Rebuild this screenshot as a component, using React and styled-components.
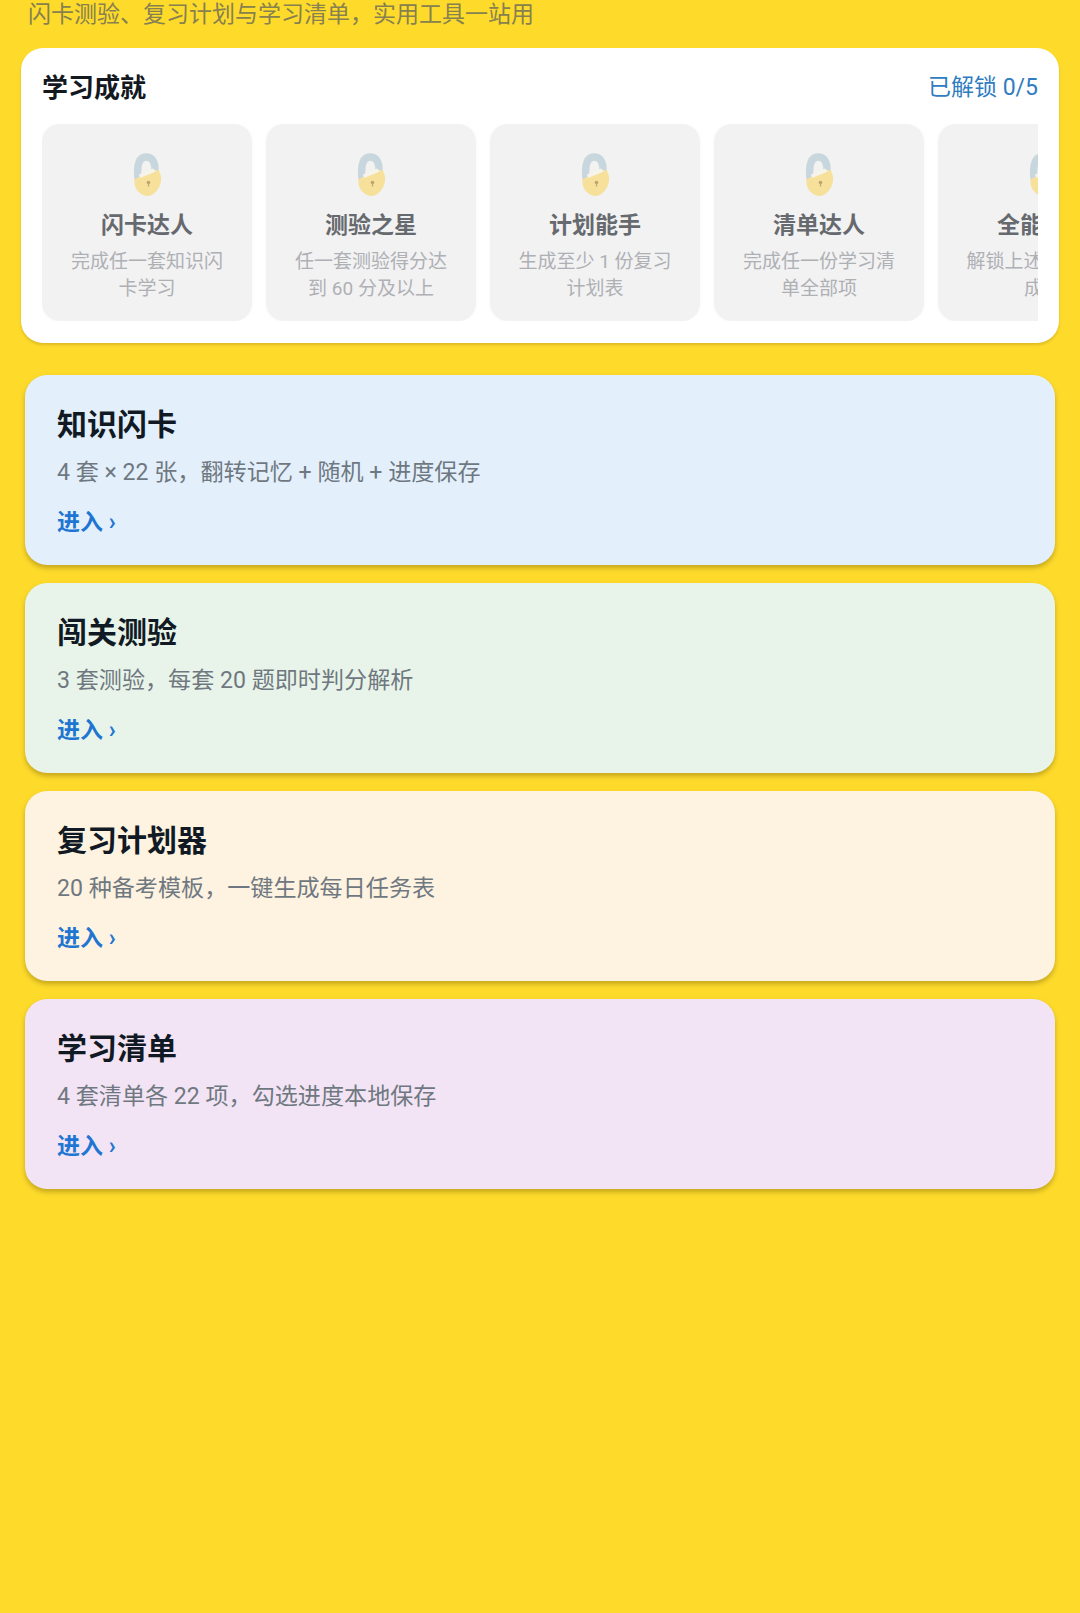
import React from 'react';
import styled, { createGlobalStyle } from 'styled-components';

const achievements = [
  { title: '闪卡达人', desc: '完成任一套知识闪卡学习' },
  { title: '测验之星', desc: '任一套测验得分达到 60 分及以上' },
  { title: '计划能手', desc: '生成至少 1 份复习计划表' },
  { title: '清单达人', desc: '完成任一份学习清单全部项' },
  { title: '全能学霸', desc: '解锁上述全部 4 项成就' },
];

const tools = [
  { title: '知识闪卡', desc: '4 套 × 22 张，翻转记忆 + 随机 + 进度保存', bg: '#e3f0fc' },
  { title: '闯关测验', desc: '3 套测验，每套 20 题即时判分解析', bg: '#e8f4e9' },
  { title: '复习计划器', desc: '20 种备考模板，一键生成每日任务表', bg: '#fef2e0' },
  { title: '学习清单', desc: '4 套清单各 22 项，勾选进度本地保存', bg: '#f2e4f5' },
];

const LockIcon = () => (
  <LockSvg viewBox="0 0 28 43" aria-hidden="true">
    <path d="M5 25 C3.5 11 6.5 4 13 4 C19.5 4 22.5 9 22 20" fill="none" stroke="#c8d7de" strokeWidth="7.5" strokeLinecap="round" />
    <path d="M1.5 26 L25 16.5 C27.5 20 28.5 24 28 28 C27 36 20.5 43 14.5 43 C8.5 43 2.5 37.5 1.5 31 Z" fill="#f7e09a" />
    <path d="M6 21.5 L20 15.5 L23 18.5 L7 25 Z" fill="#f6f4ea" />
    <circle cx="15.5" cy="29.5" r="1.8" fill="#b8a771" />
    <rect x="14.9" y="29.5" width="1.2" height="4" fill="#b8a771" />
  </LockSvg>
);

const App = () => {
  return (
    <Page>
      <GlobalStyle />
      <Subtitle>闪卡测验、复习计划与学习清单，实用工具一站用</Subtitle>

      <AchievementPanel>
        <PanelHeader>
          <PanelTitle>学习成就</PanelTitle>
          <UnlockCount>已解锁 0/5</UnlockCount>
        </PanelHeader>
        <BadgeRow>
          {achievements.map(item => (
            <Badge key={item.title}>
              <LockIcon />
              <BadgeTitle>{item.title}</BadgeTitle>
              <BadgeDesc>{item.desc}</BadgeDesc>
            </Badge>
          ))}
        </BadgeRow>
      </AchievementPanel>

      <ToolList>
        {tools.map(tool => (
          <ToolCard key={tool.title} $bg={tool.bg}>
            <ToolTitle>{tool.title}</ToolTitle>
            <ToolDesc>{tool.desc}</ToolDesc>
            <EnterLink>进入 ›</EnterLink>
          </ToolCard>
        ))}
      </ToolList>
    </Page>
  );
};

const GlobalStyle = createGlobalStyle`
  html, body {
    margin: 0;
    padding: 0;
    background: #fedb2b;
  }
  * {
    box-sizing: border-box;
  }
`;

const Page = styled.div`
  width: 1080px;
  min-height: 1613px;
  background: #fedb2b;
  font-family: Roboto, "Noto Sans CJK SC", sans-serif;
  overflow: hidden;
`;

const Subtitle = styled.p`
  margin: 0 0 18px;
  padding-left: 28px;
  font-size: 23px;
  line-height: 30px;
  color: #87804f;
`;

const AchievementPanel = styled.section`
  margin: 0 21px;
  height: 295px;
  padding: 19px 21px 22px;
  background: #fff;
  border-radius: 22px;
  box-shadow: 0 2px 3px rgba(120, 90, 0, 0.25);
`;

const PanelHeader = styled.div`
  display: flex;
  justify-content: space-between;
  align-items: center;
  height: 36px;
  margin-bottom: 21px;
`;

const PanelTitle = styled.h2`
  margin: 0;
  font-size: 26px;
  font-weight: 700;
  color: #14181f;
`;

const UnlockCount = styled.span`
  font-size: 23px;
  color: #2f7cc0;
`;

const BadgeRow = styled.div`
  display: flex;
  gap: 14px;
  overflow: hidden;
`;

const Badge = styled.div`
  flex: 0 0 210px;
  height: 197px;
  padding: 29px 20px 0;
  display: flex;
  flex-direction: column;
  align-items: center;
  background: #f2f2f3;
  border-radius: 18px;
  box-shadow: 0 0 4px rgba(0, 0, 0, 0.03);
`;

const LockSvg = styled.svg`
  width: 28px;
  height: 43px;
  flex-shrink: 0;
  filter: blur(0.6px);
`;

const BadgeTitle = styled.div`
  margin-top: 13px;
  font-size: 23px;
  line-height: 34px;
  font-weight: 700;
  color: #66696e;
`;

const BadgeDesc = styled.div`
  margin-top: 5px;
  font-size: 19px;
  line-height: 27px;
  text-align: center;
  color: #aeb0b3;
`;

const ToolList = styled.div`
  margin: 32px 25px 0;
  display: flex;
  flex-direction: column;
  gap: 18px;
`;

const ToolCard = styled.article`
  height: 190px;
  padding: 32px 32px 0;
  background: ${props => props.$bg};
  border-radius: 22px;
  box-shadow: 0 3px 5px rgba(90, 70, 0, 0.35);
`;

const ToolTitle = styled.h3`
  margin: 0;
  font-size: 30px;
  line-height: 36px;
  font-weight: 700;
  color: #111a24;
`;

const ToolDesc = styled.p`
  margin: 15px 0 0;
  font-size: 23.1px;
  line-height: 30px;
  color: #6f7880;
`;

const EnterLink = styled.div`
  margin-top: 20px;
  font-size: 23px;
  line-height: 29px;
  font-weight: 700;
  color: #1f76d2;
`;

export default App;
